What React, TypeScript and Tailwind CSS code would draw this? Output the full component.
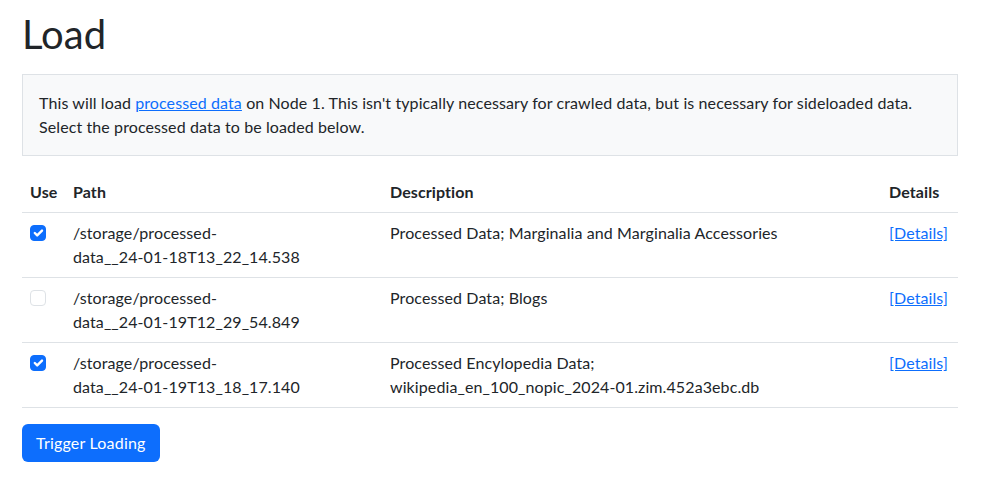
import { useState } from "react";

const rows = [
  {
    dir: "/storage/processed-",
    rest: "data__24-01-18T13_22_14.538",
    desc: "Processed Data; Marginalia and Marginalia Accessories",
    file: "",
    checked: true,
  },
  {
    dir: "/storage/processed-",
    rest: "data__24-01-19T12_29_54.849",
    desc: "Processed Data; Blogs",
    file: "",
    checked: false,
  },
  {
    dir: "/storage/processed-",
    rest: "data__24-01-19T13_18_17.140",
    desc: "Processed Encylopedia Data; ",
    file: "wikipedia_en_100_nopic_2024-01.zim.452a3ebc.db",
    checked: true,
  },
];

function Check({ checked, onChange }: { checked: boolean; onChange: () => void }) {
  return (
    <button
      onClick={onChange}
      className={
        checked
          ? "mt-[4px] w-4 h-4 rounded-[4px] bg-[#0d6efd] border border-[#0d6efd] flex items-center justify-center"
          : "mt-[4px] w-4 h-4 rounded-[4px] bg-white border border-[#dee2e6] block"
      }
    >
      {checked && (
        <svg viewBox="0 0 20 20" className="w-4 h-4 shrink-0">
          <path fill="none" stroke="#fff" strokeLinecap="round" strokeLinejoin="round" strokeWidth="3" d="m6 10 3 3 6-6" />
        </svg>
      )}
    </button>
  );
}

export default function App() {
  const [sel, setSel] = useState(rows.map((r) => r.checked));

  return (
    <div className="min-h-screen bg-white text-[#212529] pl-[22px] pt-[10px] text-[16px] leading-[24px] tracking-[0.1px]" style={{ fontFamily: "Lato, sans-serif" }}>
      <div className="w-[936px]">
        <h1 className="text-[40px] leading-[48px] font-normal tracking-normal mb-[16px]">Load</h1>

        <div className="bg-[#f8f9fa] border border-[#dee2e6] p-4 mb-4">
          This will load <a href="#" className="text-[#0d6efd] underline">processed data</a> on Node 1. This isn't typically necessary for crawled data, but is necessary for sideloaded data.
          <br />
          Select the processed data to be loaded below.
        </div>

        <table className="w-full table-fixed border-collapse mb-4">
          <colgroup>
            <col className="w-[43px]" />
            <col className="w-[317px]" />
            <col />
            <col className="w-[77px]" />
          </colgroup>
          <thead>
            <tr className="border-b border-[#dee2e6]">
              <th className="text-left font-bold p-2">Use</th>
              <th className="text-left font-bold p-2">Path</th>
              <th className="text-left font-bold p-2">Description</th>
              <th className="text-left font-bold p-2">Details</th>
            </tr>
          </thead>
          <tbody>
            {rows.map((r, i) => (
              <tr key={r.rest} className="border-b border-[#dee2e6] align-top">
                <td className="p-2">
                  <Check checked={sel[i]} onChange={() => setSel(sel.map((v, j) => (j === i ? !v : v)))} />
                </td>
                <td className="p-2">
                  {r.dir}
                  <span className="whitespace-nowrap">{r.rest}</span>
                </td>
                <td className="p-2">
                  {r.desc}
                  {r.file && <span className="whitespace-nowrap">{r.file}</span>}
                </td>
                <td className="p-2">
                  <a href="#" className="text-[#0d6efd] underline">[Details]</a>
                </td>
              </tr>
            ))}
          </tbody>
        </table>

        <button className="bg-[#0d6efd] text-white rounded-[6px] px-[14px] py-[7px] leading-[24px] tracking-[0.2px]">Trigger Loading</button>
      </div>
    </div>
  );
}
